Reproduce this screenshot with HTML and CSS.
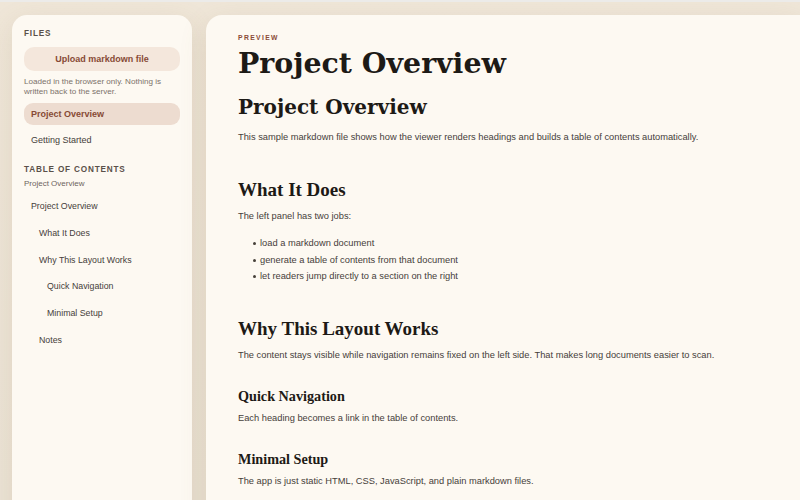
FILE: index.html
```html
<!DOCTYPE html>
<html lang="en">
<head>
<meta charset="utf-8">
<title>Markdown Viewer</title>
<link rel="stylesheet" href="styles.css">
</head>
<body>
<div class="page">
  <aside class="sidebar">
    <div class="label">Files</div>
    <button class="upload">Upload markdown file</button>
    <p class="note">Loaded in the browser only. Nothing is written back to the server.</p>
    <ul class="files">
      <li class="file active">Project Overview</li>
      <li class="file">Getting Started</li>
    </ul>
    <div class="label toc-label">Table of Contents</div>
    <div class="toc-doc">Project Overview</div>
    <ul class="toc">
      <li class="lvl1">Project Overview</li>
      <li class="lvl2">What It Does</li>
      <li class="lvl2">Why This Layout Works</li>
      <li class="lvl3">Quick Navigation</li>
      <li class="lvl3">Minimal Setup</li>
      <li class="lvl2">Notes</li>
    </ul>
  </aside>
  <main class="content">
    <div class="eyebrow">Preview</div>
    <h1 class="title">Project Overview</h1>
    <h1 class="h1">Project Overview</h1>
    <p>This sample markdown file shows how the viewer renders headings and builds a table of contents automatically.</p>
    <h2 class="h2">What It Does</h2>
    <p>The left panel has two jobs:</p>
    <ul class="bullets">
      <li>load a markdown document</li>
      <li>generate a table of contents from that document</li>
      <li>let readers jump directly to a section on the right</li>
    </ul>
    <h2 class="h2 after-list">Why This Layout Works</h2>
    <p>The content stays visible while navigation remains fixed on the left side. That makes long documents easier to scan.</p>
    <h3 class="h3">Quick Navigation</h3>
    <p>Each heading becomes a link in the table of contents.</p>
    <h3 class="h3">Minimal Setup</h3>
    <p>The app is just static HTML, CSS, JavaScript, and plain markdown files.</p>
  </main>
</div>
</body>
</html>
```
FILE: styles.css
```css
* { box-sizing: border-box; }
html, body { margin: 0; height: 100%; }
body {
  overflow: hidden;
  border-top: 2px solid #ecebe9;
  background: linear-gradient(180deg, #efe6d8 0%, #ebe3d5 100%);
  font-family: "Liberation Sans", Arial, sans-serif;
  color: #3d3731;
}
.page {
  display: grid;
  grid-template-columns: 180px 1fr;
  gap: 14px;
  padding: 13px 0 0 12px;
}
.sidebar, .content {
  background: #fdf9f2;
  min-height: 520px;
  box-shadow: 0 8px 28px rgba(140, 110, 70, 0.14);
}
.sidebar {
  border-radius: 15px;
  padding: 14px 12px;
}
.content {
  border-radius: 16px 0 0 0;
  padding: 18px 32px;
}
.label {
  font-size: 8.2px;
  font-weight: bold;
  letter-spacing: 0.1em;
  text-transform: uppercase;
  color: #5a5049;
  line-height: 10px;
}
.upload {
  display: block;
  width: 100%;
  height: 24px;
  margin-top: 8px;
  border: none;
  border-radius: 10px;
  background: #f4e7dc;
  color: #874a35;
  font-family: inherit;
  font-size: 9px;
  font-weight: bold;
}
.note {
  margin: 6px 0 0;
  font-size: 8.1px;
  line-height: 10px;
  color: #7c726a;
}
.files, .toc {
  list-style: none;
  margin: 0;
  padding: 0;
}
.files { margin-top: 6px; display: flex; flex-direction: column; gap: 4px; }
.file {
  height: 22px;
  line-height: 22px;
  padding: 0 7px;
  border-radius: 9px;
  font-size: 9px;
  color: #45403a;
}
.file.active {
  background: #eddcd0;
  color: #874a35;
  font-weight: bold;
}
.toc-label { margin-top: 14px; }
.toc-doc {
  margin-top: 4px;
  font-size: 8px;
  color: #6d645d;
}
.toc { margin-top: 7px; display: flex; flex-direction: column; gap: 4.8px; }
.toc li {
  height: 22px;
  line-height: 22px;
  font-size: 8.8px;
  color: #45403a;
}
.toc .lvl1 { padding-left: 7px; }
.toc .lvl2 { padding-left: 15px; }
.toc .lvl3 { padding-left: 23px; }

.eyebrow {
  font-size: 6.8px;
  font-weight: bold;
  letter-spacing: 0.2em;
  text-transform: uppercase;
  color: #8a4b37;
  line-height: 10px;
}
h1, h2, h3 {
  font-family: "Liberation Serif", "Times New Roman", serif;
  font-weight: bold;
  color: #1d1a16;
  margin: 0;
}
.title, .h1 { font-family: "DejaVu Serif", Georgia, serif; }
.title { font-size: 28.4px; line-height: 34px; margin-top: 3px; }
.h1 { font-size: 20px; line-height: 26px; margin-top: 14px; }
.h2 { font-size: 19px; line-height: 22px; margin-top: 35px; }
.h2.after-list { margin-top: 33px; }
.h3 { font-size: 14.2px; line-height: 18px; margin-top: 25px; }
.content p {
  margin: 10px 0 0;
  font-size: 9.3px;
  line-height: 14px;
  color: #46403a;
}
.content .h1 + p { margin-top: 10px; }
.content .h2 + p { margin-top: 8px; }
.content .h3 + p { margin-top: 6px; }
.bullets {
  list-style: none;
  margin: 12px 0 0;
  padding-left: 22px;
  font-size: 9.3px;
  line-height: 16.5px;
  color: #46403a;
}
.bullets li { position: relative; }
.bullets li::before {
  content: "";
  position: absolute;
  left: -7px;
  top: 7px;
  width: 3px;
  height: 3px;
  border-radius: 50%;
  background: #46403a;
}
```
